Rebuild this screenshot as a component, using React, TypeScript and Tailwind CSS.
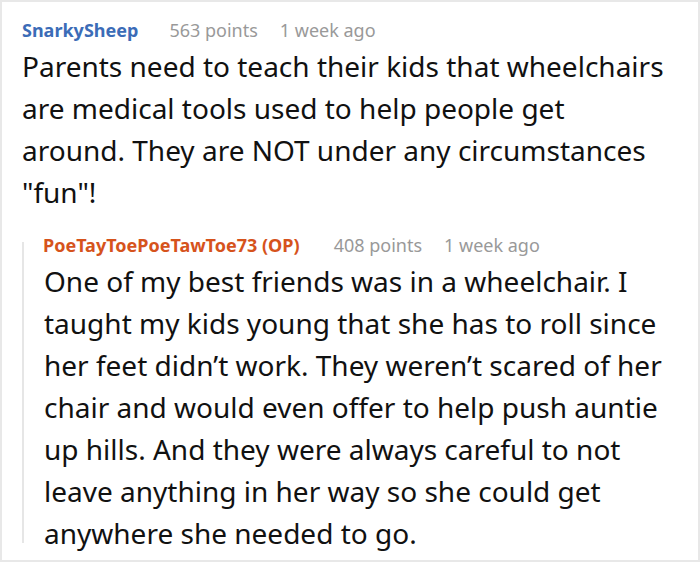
export default function App() {
  return (
    <div className="w-[700px] h-[562px] bg-white border-2 border-[#e8e8e8] font-['Noto_Sans',sans-serif] pl-[20px] pr-[16px] pt-[15px] overflow-hidden">
      <div className="flex items-baseline text-[18px] leading-[26px]">
        <span className="font-bold text-[#3b6cb7]">SnarkySheep</span>
        <span className="ml-[31px] text-[#999999]">563 points</span>
        <span className="ml-[22px] text-[#999999]">1 week ago</span>
      </div>
      <p className="mt-[2px] mr-[13px] text-[28px] leading-[42px] text-[#111111]">
        Parents need to teach their kids that wheelchairs are medical tools used to help people get around. They are NOT under any circumstances "fun"!
      </p>
      <div className="mt-[19px] flex">
        <div className="w-[2px] shrink-0 mt-[10px] mb-[11px] bg-[#e6e6e6]" />
        <div className="pl-[19px]">
          <div className="flex items-baseline text-[18px] leading-[26px]">
            <span className="font-bold text-[#d6531c]">PoeTayToePoeTawToe73 (OP)</span>
            <span className="ml-[34px] text-[#999999]">408 points</span>
            <span className="ml-[22px] text-[#999999]">1 week ago</span>
          </div>
          <p className="mt-[2px] ml-[1px] text-[28px] leading-[42px] text-[#111111]">
            One of my best friends was in a wheelchair. I taught my kids young that she has to roll since her feet didn’t work. They weren’t scared of her chair and would even offer to help push auntie up hills. And they were always careful to not leave anything in her way so she could get anywhere she needed to go.
          </p>
        </div>
      </div>
    </div>
  );
}
